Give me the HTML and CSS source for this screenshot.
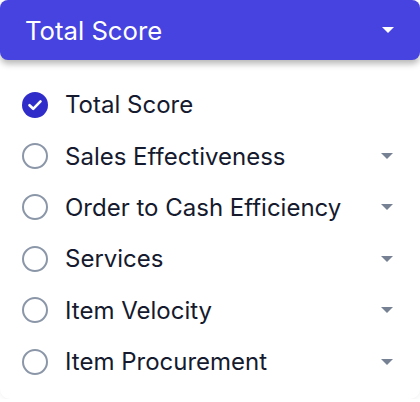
FILE: index.html
```html
<!DOCTYPE html>
<html>
	<head>
		<title>Score filter</title>
		<link rel="stylesheet" href="styles.css">
	</head>
	<body>
		<div class="select">
			<span class="select-label">Total Score</span>
			<span class="caret caret-white"></span>
		</div>
		<ul class="options">
			<li class="option">
				<span class="radio checked">
					<svg viewBox="0 0 26 26" width="26" height="26"><circle cx="13" cy="13" r="13" fill="#2f2cc9"/><path d="M7.5 13.2l3.7 3.6 7.3-7.4" fill="none" stroke="#fff" stroke-width="2.6" stroke-linecap="round" stroke-linejoin="round"/></svg>
				</span>
				<span class="option-label">Total Score</span>
			</li>
			<li class="option">
				<span class="radio"></span>
				<span class="option-label">Sales Effectiveness</span>
				<span class="caret"></span>
			</li>
			<li class="option">
				<span class="radio"></span>
				<span class="option-label">Order to Cash Efficiency</span>
				<span class="caret"></span>
			</li>
			<li class="option">
				<span class="radio"></span>
				<span class="option-label">Services</span>
				<span class="caret"></span>
			</li>
			<li class="option">
				<span class="radio"></span>
				<span class="option-label">Item Velocity</span>
				<span class="caret"></span>
			</li>
			<li class="option">
				<span class="radio"></span>
				<span class="option-label">Item Procurement</span>
				<span class="caret"></span>
			</li>
		</ul>
	</body>
</html>
```
FILE: styles.css
```css
body {
	margin: 0;
	background: #fff;
	font-family: Inter, "Noto Sans", sans-serif;
}
.select {
	position: relative;
	z-index: 1;
	display: flex;
	align-items: center;
	height: 60px;
	padding: 0 26px 0 25px;
	background: #4743e0;
	border-radius: 8px;
	box-shadow: 0 4px 6px rgba(0, 0, 0, 0.28);
}
.select-label {
	flex: 1;
	color: #fff;
	font-size: 25.7px;
}
.caret {
	width: 0;
	height: 0;
	border-left: 6px solid transparent;
	border-right: 6px solid transparent;
	border-top: 6px solid #778194;
}
.caret-white {
	border-top-color: #fff;
}
.options {
	list-style: none;
	margin: 0;
	padding: 19px 27px 12px 22px;
	border-radius: 0 0 10px 10px;
	box-shadow: 0 1px 4px rgba(0, 0, 0, 0.06);
}
.option {
	display: flex;
	align-items: center;
	height: 51.4px;
}
.radio {
	flex: none;
	width: 26px;
	height: 26px;
	box-sizing: border-box;
	border: 2.5px solid #8b97a8;
	border-radius: 50%;
	margin-right: 17px;
}
.radio.checked {
	border: 0;
}
.radio svg {
	display: block;
}
.option-label {
	flex: 1;
	color: #151a2e;
	font-size: 24px;
	font-weight: 400;
}
```
